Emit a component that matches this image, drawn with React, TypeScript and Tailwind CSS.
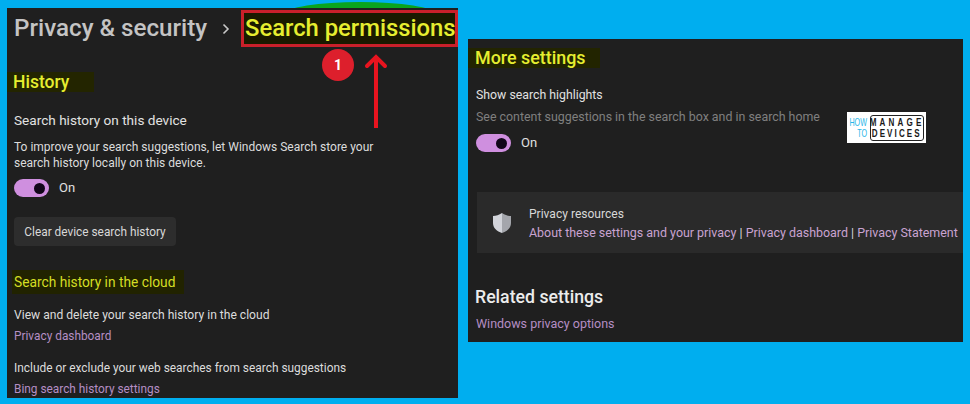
import React from 'react'

const Toggle = () => (
    <div className="flex items-center gap-[10px]">
        <div className="w-[35px] h-[18px] rounded-full bg-[#cf8fdf] flex items-center justify-end pr-[4px]">
            <div className="w-[11px] h-[11px] rounded-full bg-[#12061a]" />
        </div>
        <span className="text-[13px] leading-[18px] text-[#e0e0e0]">On</span>
    </div>
)

const Shield = () => (
    <svg className="shrink-0" width="20" height="22" viewBox="0 0 20 22">
        <path d="M10 1 C7 3 4 4 1 4 L1 11 C1 16 5 19.5 10 21 Z" fill="#d2d4da" />
        <path d="M10 1 C13 3 16 4 19 4 L19 11 C19 16 15 19.5 10 21 Z" fill="#a4a6ac" />
    </svg>
)

const Logo = () => (
    <div className="w-[79px] h-[31px] bg-white flex items-center pl-[2px] gap-[3px] font-['Liberation_Sans',sans-serif]">
        <div className="w-[18px] flex flex-col items-end text-[#29b6e8] text-[11px] leading-[11px]">
            <span className="scale-x-[0.65] origin-right">HOW</span>
            <span className="scale-x-[0.65] origin-right">TO</span>
        </div>
        <div className="w-[54px] h-[26px] border border-[#222] rounded-[3px] flex flex-col items-center justify-center text-[#1a1a1a] text-[11.5px] leading-[11px] font-bold overflow-hidden">
            <span className="scale-x-[0.7] tracking-[4.5px] whitespace-nowrap">MANAGE</span>
            <span className="scale-x-[0.7] tracking-[3px] whitespace-nowrap">DEVICES</span>
        </div>
    </div>
)

const App = () => {
    return (
        <div className="relative w-[970px] h-[404px] overflow-hidden bg-[#00aeef] flex items-start font-['Roboto',sans-serif]">
            <div className="absolute left-[285px] top-[2px] w-[150px] h-[24px] rounded-[50%] bg-[#0aa51e]" />

            {/* left panel */}
            <div className="relative w-[451px] h-[390px] ml-[7px] mt-[8px] bg-[#1f1f1f] overflow-hidden">
                <div className="flex items-center mt-[2px] h-[37px] pl-[7px]">
                    <span className="w-[193px] text-[24.2px] leading-[37px] font-medium text-[#c4c4c4] whitespace-nowrap">Privacy &amp; security</span>
                    <svg className="ml-[14px]" width="10" height="12" viewBox="0 0 10 12" fill="none" stroke="#c8c8c8" strokeWidth="1.6">
                        <path d="M2.5 1.5 L7 6 L2.5 10.5" />
                    </svg>
                    <div className="ml-[10px] w-[217px] h-[37px] border-[3px] border-[#c9202a] bg-[#1a1a00] flex items-center pl-[1px]">
                        <span className="text-[23.8px] leading-[31px] font-medium text-[#e6ee30] whitespace-nowrap">Search permissions</span>
                    </div>
                </div>

                <div className="mt-[25px] w-[87px] h-[20px] bg-[#232500] pl-[6px]">
                    <h2 className="text-[17.5px] leading-[20px] font-medium text-[#e6ee30]">History</h2>
                </div>

                <div className="pl-[7px]">
                    <p className="mt-[18px] text-[13.6px] leading-[20px] text-[#e2e2e2]">Search history on this device</p>
                    <p className="mt-[9px] w-[372px] text-[12px] leading-[16px] text-[#dcdcdc]">To improve your search suggestions, let Windows Search store your search history locally on this device.</p>
                    <div className="mt-[8px]"><Toggle /></div>
                    <button className="mt-[20px] w-[162px] h-[29px] rounded-[4px] bg-[#2d2d2d] text-[11.85px] leading-[30px] text-[#d8d8d8] text-center">Clear device search history</button>
                </div>

                <div className="mt-[24px] ml-[5px] w-[172px] h-[24px] bg-[#212300] pl-[2px]">
                    <h3 className="text-[13.75px] leading-[24px] text-[#d4de24] whitespace-nowrap">Search history in the cloud</h3>
                </div>

                <div className="pl-[7px]">
                    <p className="mt-[11px] text-[12.1px] leading-[20px] text-[#dcdcdc]">View and delete your search history in the cloud</p>
                    <p className="mt-[1px] text-[11.85px] leading-[20px] text-[#b58ec4]">Privacy dashboard</p>
                    <p className="mt-[12px] text-[11.9px] leading-[20px] text-[#dcdcdc] whitespace-nowrap">Include or exclude your web searches from search suggestions</p>
                    <p className="mt-[1px] text-[11.85px] leading-[20px] text-[#b58ec4]">Bing search history settings</p>
                </div>

                <div className="absolute left-[315px] top-[41px] w-[32px] h-[32px] rounded-full bg-[#dd1f2c] flex items-center justify-center text-white text-[14px] font-bold">1</div>
                <svg className="absolute left-[357px] top-[44px]" width="24" height="78" viewBox="0 0 24 78" fill="none" stroke="#e8141f" strokeWidth="4">
                    <path d="M12 4 L12 76" />
                    <path d="M3 14 L12 5 L21 14" strokeLinecap="round" />
                </svg>
            </div>

            {/* right panel */}
            <div className="w-[495px] h-[303px] ml-[10px] mt-[39px] bg-[#1f1f1f] overflow-hidden">
                <div className="mt-[9px] w-[132px] h-[20px] bg-[#222400] pl-[7px]">
                    <h2 className="text-[17.9px] leading-[20px] font-medium text-[#e6ee30] whitespace-nowrap">More settings</h2>
                </div>
                <div className="pl-[8px] relative">
                    <p className="mt-[18px] text-[12.3px] leading-[18px] text-[#e2e2e2]">Show search highlights</p>
                    <p className="mt-[4px] text-[12.4px] leading-[18px] text-[#7f7f7f] whitespace-nowrap">See content suggestions in the search box and in search home</p>
                    <div className="mt-[8px]"><Toggle /></div>
                    <div className="absolute left-[379px] top-[26px]"><Logo /></div>
                </div>

                <div className="mt-[40px] ml-[9px] h-[61px] bg-[#2a2a2a] flex items-center pl-[15px]">
                    <Shield />
                    <div className="ml-[17px] mt-[2px]">
                        <p className="text-[12.05px] leading-[18px] text-[#d8d8d8]">Privacy resources</p>
                        <p className="mt-[1px] text-[12.45px] leading-[18px] text-[#c9a3d1] whitespace-nowrap">About these settings and your privacy <span className="text-[#d8d8d8]">|</span> Privacy dashboard <span className="text-[#d8d8d8]">|</span> Privacy Statement</p>
                    </div>
                </div>

                <h2 className="mt-[33px] pl-[7px] text-[17.7px] leading-[22px] font-medium text-[#ececec]">Related settings</h2>
                <p className="mt-[6px] pl-[8px] text-[12.5px] leading-[20px] text-[#b58ec4]">Windows privacy options</p>
            </div>
        </div>
    )
}

export default App
